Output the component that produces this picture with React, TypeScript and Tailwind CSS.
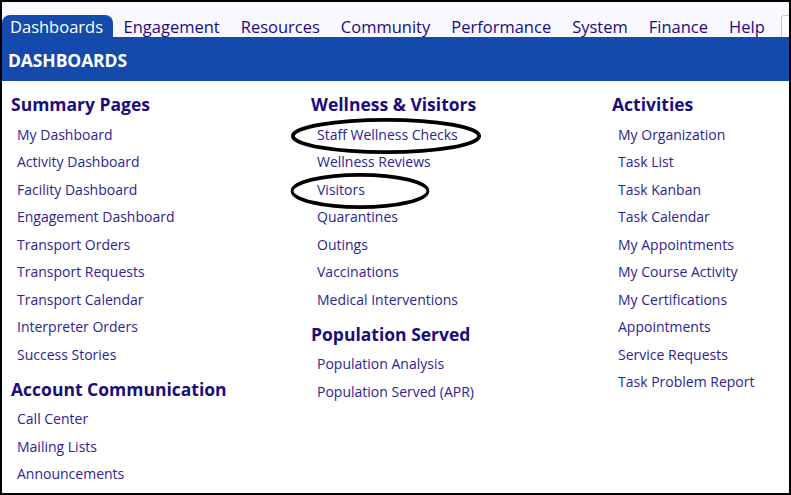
const tabs = ["Dashboards", "Engagement", "Resources", "Community", "Performance", "System", "Finance", "Help"];

type Section = { title: string; links: string[] };

const columns: Section[][] = [
  [
    {
      title: "Summary Pages",
      links: [
        "My Dashboard",
        "Activity Dashboard",
        "Facility Dashboard",
        "Engagement Dashboard",
        "Transport Orders",
        "Transport Requests",
        "Transport Calendar",
        "Interpreter Orders",
        "Success Stories",
      ],
    },
    { title: "Account Communication", links: ["Call Center", "Mailing Lists", "Announcements"] },
  ],
  [
    {
      title: "Wellness & Visitors",
      links: [
        "Staff Wellness Checks",
        "Wellness Reviews",
        "Visitors",
        "Quarantines",
        "Outings",
        "Vaccinations",
        "Medical Interventions",
      ],
    },
    { title: "Population Served", links: ["Population Analysis", "Population Served (APR)"] },
  ],
  [
    {
      title: "Activities",
      links: [
        "My Organization",
        "Task List",
        "Task Kanban",
        "Task Calendar",
        "My Appointments",
        "My Course Activity",
        "My Certifications",
        "Appointments",
        "Service Requests",
        "Task Problem Report",
      ],
    },
  ],
];

function Circle({ className }: { className: string }) {
  return (
    <svg className={"absolute pointer-events-none " + className} viewBox="0 0 200 40" preserveAspectRatio="none">
      <ellipse cx="100" cy="20" rx="97" ry="17" fill="none" stroke="#000" strokeWidth="4" />
    </svg>
  );
}

export default function App() {
  return (
    <div
      className="relative w-[791px] h-[495px] border-2 border-black bg-white overflow-hidden"
      style={{ fontFamily: "'Open Sans', 'Noto Sans', sans-serif" }}
    >
      {/* tab strip */}
      <div className="h-[35px] bg-[#f8f8fe] flex items-end overflow-hidden">
        {tabs.map((t, i) => (
          <div
            key={t}
            className={
              i === 0
                ? "h-[22px] pl-[8px] pr-[10px] rounded-t-[8px] bg-[#134aab] text-white text-[16.5px] leading-[24px] whitespace-nowrap shrink-0"
                : "h-[22px] px-[10.5px] text-[#1b0c7e] text-[16.5px] leading-[24px] whitespace-nowrap shrink-0"
            }
          >
            {t}
          </div>
        ))}
        <div className="h-[22px] w-[12px] ml-[6px] border-l border-t border-[#c8c8d0] rounded-tl-[3px] bg-white shrink-0" />
      </div>

      {/* section band */}
      <div className="h-[44px] bg-[#134aab] flex items-center px-[6px] pt-[3px]">
        <span className="text-white font-bold text-[17.5px] tracking-[-0.1px]">DASHBOARDS</span>
      </div>

      {/* columns */}
      <div className="grid grid-cols-[300px_301px_1fr] pl-[9px] pt-[7.5px]">
        {columns.map((col, ci) => (
          <div key={ci} className="flex flex-col">
            {col.map((sec, si) => (
              <div key={sec.title} className={si > 0 ? "mt-[5px]" : ""}>
                <div className="h-[32px] flex items-center text-[17.5px] font-bold text-[#1b0c7e] whitespace-nowrap">
                  {sec.title}
                </div>
                {sec.links.map((l) => (
                  <div key={l} className="h-[27.5px] flex items-center pl-[6px] text-[14px] text-[#2e2394] whitespace-nowrap">
                    {l}
                  </div>
                ))}
              </div>
            ))}
          </div>
        ))}
      </div>

      {/* hand-drawn annotations */}
      <Circle className="left-[288px] top-[115px] w-[192px] h-[38px]" />
      <Circle className="left-[288px] top-[170px] w-[140px] h-[38px]" />
    </div>
  );
}
